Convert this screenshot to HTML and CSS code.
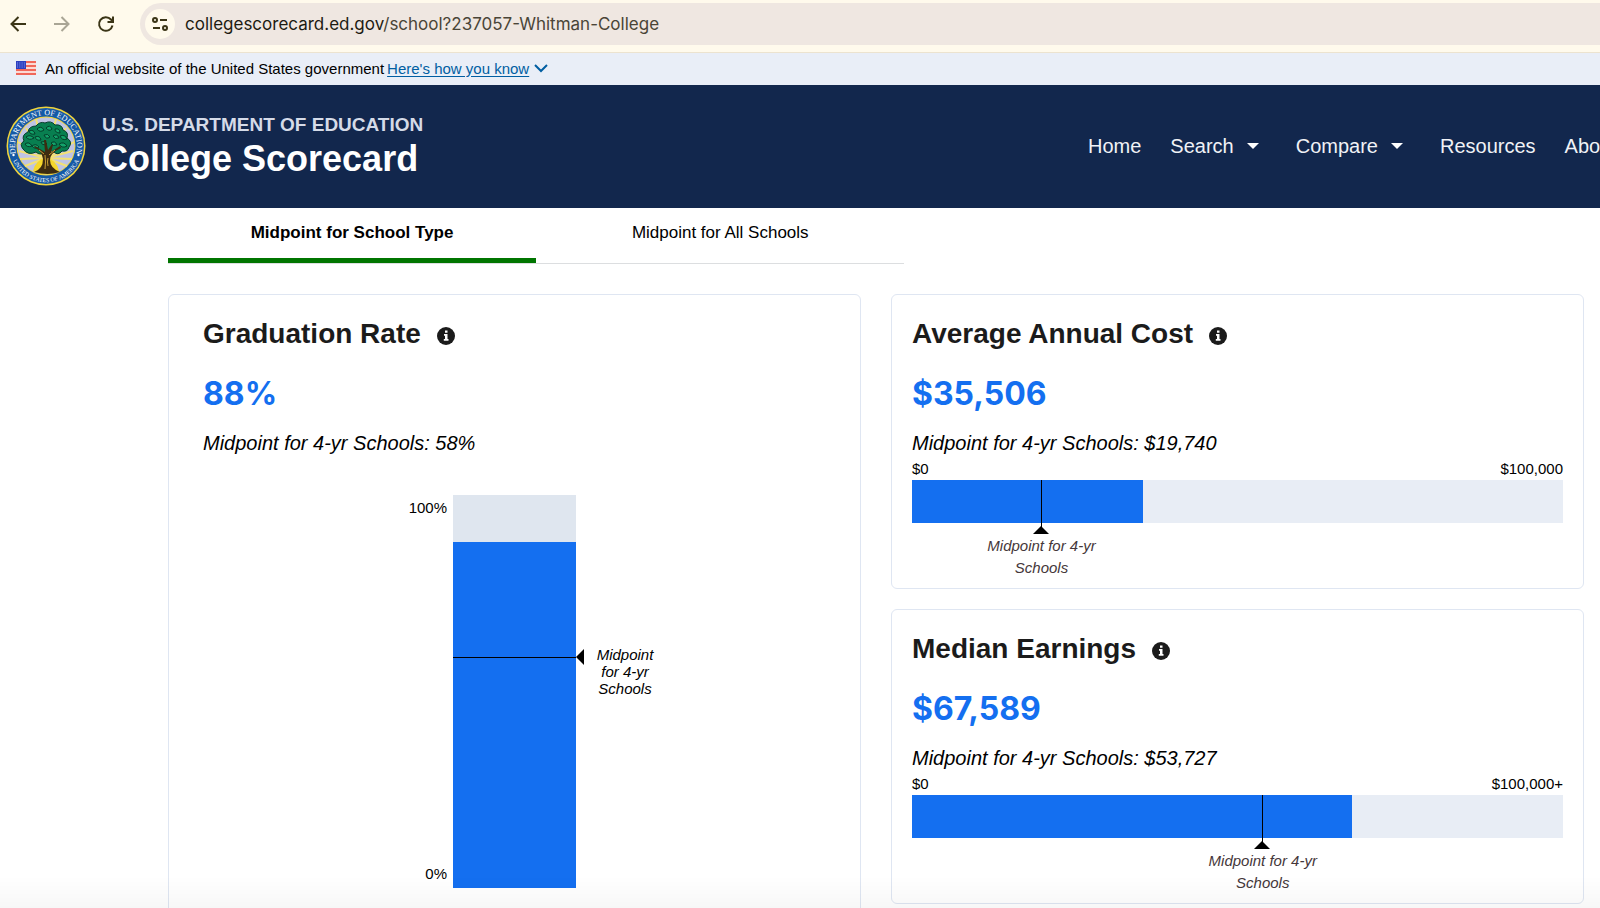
FILE: index.html
```
<!DOCTYPE html>
<html lang="en">
<head>
    <meta charset="UTF-8">
    <meta name="viewport" content="width=device-width, initial-scale=1.0">
    <title>Whitman College | College Scorecard</title>
    <link rel="stylesheet" href="styles.css">
</head>
<body>
    <div class="toolbar">
        <button class="tool-button" type="button" aria-label="Back">
            <svg width="20" height="20" viewBox="0 0 20 20" fill="none" stroke="#3b3516" stroke-width="2"><path d="M18 10H4M10.500 3L3.500 10l7 7"/></svg>
        </button>
        <button class="tool-button" type="button" aria-label="Forward" disabled>
            <svg width="20" height="20" viewBox="0 0 20 20" fill="none" stroke="#a9a595" stroke-width="2"><path d="M2 10h14M9.500 3l7 7-7 7"/></svg>
        </button>
        <button class="tool-button" type="button" aria-label="Reload">
            <svg width="20" height="20" viewBox="0 0 20 20" fill="none" stroke="#3b3516" stroke-width="2"><path d="M16.500 11.500A6.800 6.800 0 1 1 15 5.500L16.500 7.500M17 2.500v5.500h-5.500"/></svg>
        </button>
        <div class="address">
            <button class="site-info" type="button" aria-label="View site information">
                <svg width="18" height="18" viewBox="0 0 18 18" fill="none" stroke="#3b3516" stroke-width="2"><circle cx="4" cy="5" r="2"/><path d="M9 5h7M2 13h7"/><circle cx="14" cy="13" r="2"/></svg>
            </button>
            <span class="url"><span class="url-host">collegescorecard.ed.gov</span>/school?237057-Whitman-College</span>
        </div>
    </div>

    <div class="gov-banner">
        <svg class="flag" width="20" height="14" viewBox="0 0 20 14">
            <rect width="20" height="14" fill="#fbd9d4"/>
            <path d="M0 1h20M0 5h20M0 9h20M0 13h20" stroke="#f0675a" stroke-width="2"/>
            <rect width="10" height="8" fill="#2b3fc0"/>
            <path d="M1 2h8M1 4h8M1 6h8" stroke="#8292e6" stroke-width="1" stroke-dasharray="1 1.300"/>
        </svg>
        <span>An official website of the United States government</span>
        <a href="#">Here's how you know</a>
        <svg width="14" height="10" viewBox="0 0 14 10" fill="none" stroke="#005ea2" stroke-width="2"><path d="M1 2l6 6 6-6"/></svg>
    </div>

    <header class="site-header">
        <a class="brand" href="#">
            <svg class="seal" width="80" height="80" viewBox="0 0 80 80">
                <defs>
                    <path id="ring-top" d="M10.800 50.600A31 31 0 1 1 69.200 50.600"/>
                    <path id="ring-bottom" d="M5.700 51.500A36.200 36.200 0 0 0 74.300 51.500"/>
                </defs>
                <circle cx="40" cy="40" r="39.500" fill="#f0d43c"/>
                <circle cx="40" cy="40" r="38" fill="#1559a6"/>
                <circle cx="40" cy="40" r="29.500" fill="#f0d43c"/>
                <circle cx="40" cy="40" r="28.500" fill="#bfc4e4"/>
                <path d="M40 52L12 36M40 52L13 45M40 52L14 53M40 52L19 60M40 52L20 22M40 52L30 13M40 52L50 13M40 52L60 22M40 52L68 36M40 52L67 45M40 52L66 53M40 52L61 60" stroke="#f3e173" stroke-width="2"/>
                <path d="M27 65Q29 54 40 52Q51 54 53 65Q40 72 27 65Z" fill="#f5d72c"/>
                <g fill="#087f50" stroke="#053d2a" stroke-width="1">
                    <path d="M17 43q-4-5 1-8-3-6 4-9 1-6 8-6 4-5 9-3 6-3 10 2 7-1 8 5 6 2 4 8 6 4 2 9-1 5-7 4-4 5-8 1-3-3-8 0-6 4-10 0-8 4-13-3z"/>
                    <path d="M20 31q4-3 8 1-5 3-8-1zM23 25q5-2 6 3-5 1-6-3zM31 23q4-4 7 1-4 3-7-1zM40 22q4-4 6 1-3 3-6-1zM49 23q5-1 5 4-5 0-5-4zM54 30q5-2 7 3-5 2-7-3zM47 30q4-3 6 2-4 2-6-2zM38 29q4-2 6 2-4 3-6-2zM29 31q5-2 6 3-5 1-6-3zM19 38q4-3 7 2-5 2-7-2zM26 40q4-3 7 1-4 3-7-1zM35 36q4-2 6 2-5 2-6-2zM45 37q4-3 6 2-4 2-6-2zM53 38q5-3 8 2-5 3-8-2z" fill="#13a36a"/>
                </g>
                <path d="M28 66q9-3 9-13-1-8-9-12l1-1 10 6-1-12h2l2 10 4-6 1 1-2 7 9-6 1 2q-11 5-11 12 0 8 10 12-12 4-26 0z" fill="#3d2c10"/>
                <path d="M39 63q1-7 0-14M43 49l6-5M38 48l-5-4M42 60q-1-4 0-8" fill="none" stroke="#c9a035" stroke-width="1"/>
                <text class="seal-top"><textPath href="#ring-top" startOffset="50%">DEPARTMENT OF EDUCATION</textPath></text>
                <text class="seal-bottom"><textPath href="#ring-bottom" startOffset="50%">UNITED STATES OF AMERICA</textPath></text>
                <circle cx="7.500" cy="49" r="1.200" fill="#fff"/>
                <circle cx="72.500" cy="49" r="1.200" fill="#fff"/>
            </svg>
            <span class="brand-text">
                <span class="department">U.S. DEPARTMENT OF EDUCATION</span>
                <span class="product">College Scorecard</span>
            </span>
        </a>
        <nav class="main-nav">
            <a href="#">Home</a>
            <button class="nav-menu" type="button">Search <span class="caret"></span></button>
            <button class="nav-menu" type="button">Compare <span class="caret"></span></button>
            <a href="#">Resources</a>
            <a href="#">About</a>
        </nav>
    </header>

    <main>
        <div class="tabs" role="tablist">
            <button class="tab active" type="button" role="tab" aria-selected="true">Midpoint for School Type</button>
            <button class="tab" type="button" role="tab" aria-selected="false">Midpoint for All Schools</button>
        </div>

        <div class="cards">
            <section class="card card-graduation">
                <h2>Graduation Rate
                    <button class="info" type="button" aria-label="About Graduation Rate"><svg width="18" height="18" viewBox="0 0 18 18"><circle cx="9" cy="9" r="9" fill="#1b1b1b"/><path d="M8 3.500h2.500v2.200H8zM7 7h3.500v5h1v1.800H6.800V12H8V8.700H7z" fill="#fff"/></svg></button>
                </h2>
                <p class="value">88%</p>
                <p class="midpoint">Midpoint for 4-yr Schools: 58%</p>
                <div class="column-chart">
                    <div class="column-axis"><span>100%</span><span>0%</span></div>
                    <div class="column">
                        <div class="column-fill" style="height: 88%"></div>
                        <div class="column-marker" style="bottom: 58.5%"><span>Midpoint for 4-yr Schools</span></div>
                    </div>
                </div>
            </section>

            <div class="card-stack">
                <section class="card">
                    <h2>Average Annual Cost
                        <button class="info" type="button" aria-label="About Average Annual Cost"><svg width="18" height="18" viewBox="0 0 18 18"><circle cx="9" cy="9" r="9" fill="#1b1b1b"/><path d="M8 3.500h2.500v2.200H8zM7 7h3.500v5h1v1.800H6.800V12H8V8.700H7z" fill="#fff"/></svg></button>
                    </h2>
                    <p class="value">$35,506</p>
                    <p class="midpoint">Midpoint for 4-yr Schools: $19,740</p>
                    <div class="bar-axis"><span>$0</span><span>$100,000</span></div>
                    <div class="bar">
                        <div class="bar-fill" style="width: 35.506%"></div>
                        <div class="bar-marker" style="left: 19.740%"><span>Midpoint for 4-yr Schools</span></div>
                    </div>
                </section>

                <section class="card">
                    <h2>Median Earnings
                        <button class="info" type="button" aria-label="About Median Earnings"><svg width="18" height="18" viewBox="0 0 18 18"><circle cx="9" cy="9" r="9" fill="#1b1b1b"/><path d="M8 3.500h2.500v2.200H8zM7 7h3.500v5h1v1.800H6.800V12H8V8.700H7z" fill="#fff"/></svg></button>
                    </h2>
                    <p class="value">$67,589</p>
                    <p class="midpoint">Midpoint for 4-yr Schools: $53,727</p>
                    <div class="bar-axis"><span>$0</span><span>$100,000+</span></div>
                    <div class="bar">
                        <div class="bar-fill" style="width: 67.589%"></div>
                        <div class="bar-marker" style="left: 53.727%"><span>Midpoint for 4-yr Schools</span></div>
                    </div>
                </section>
            </div>
        </div>
    </main>
</body>
</html>
```

FILE: styles.css
```
* {
    box-sizing: border-box;
}
body {
    margin: 0;
    font-family: "Liberation Sans", Helvetica, Arial, sans-serif;
    color: #000;
    background: #fff;
    overflow-x: hidden;
    scrollbar-width: none;
}
body::after {
    content: "";
    position: fixed;
    left: 0;
    right: 0;
    bottom: 0;
    height: 32px;
    background: linear-gradient(rgba(0, 0, 0, 0), rgba(0, 0, 0, 0.03));
    pointer-events: none;
}
button {
    padding: 0;
    border: 0;
    background: none;
    color: inherit;
    font: inherit;
    cursor: pointer;
}
svg {
    display: block;
}

/* browser bar */
.toolbar {
    display: flex;
    align-items: center;
    height: 53px;
    padding: 2px 0 7px 8px;
    background: #fffaec;
    border-bottom: 1px solid #ece3cf;
}
.tool-button {
    flex: none;
    width: 20px;
    margin-right: 24px;
}
.address {
    flex: 1;
    display: flex;
    align-items: center;
    gap: 10px;
    height: 42px;
    padding-left: 5px;
    background: #efe7e1;
    border-radius: 21px 0 0 21px;
}
.site-info {
    display: flex;
    align-items: center;
    justify-content: center;
    width: 30px;
    height: 30px;
    border-radius: 50%;
    background: #fffaec;
}
.url {
    font-family: Inter, Roboto, sans-serif;
    font-size: 17px;
    color: #4a4537;
}
.url-host {
    color: #1d1b12;
}

.gov-banner {
    display: flex;
    align-items: center;
    height: 32px;
    padding: 0 16px 2px;
    background: #e9eef7;
    font-size: 15px;
}
.gov-banner .flag {
    margin-right: 9px;
}
.gov-banner a {
    margin: 0 5px 0 3px;
    color: #005ea2;
    text-underline-offset: 2px;
}

.site-header {
    display: flex;
    align-items: center;
    height: 123px;
    padding-bottom: 1px;
    background: #12274d;
    color: #fff;
    overflow: hidden;
}
.brand {
    flex: 0 0 68%;
    display: flex;
    align-items: center;
    gap: 16px;
    padding-left: 6px;
    color: #fff;
    text-decoration: none;
}
.seal {
    flex: none;
}
.seal text {
    font-family: "Liberation Serif", serif;
    fill: #fff;
    text-anchor: middle;
}
.seal-top {
    font-size: 8px;
}
.seal-bottom {
    font-size: 6px;
}
.brand-text {
    display: flex;
    flex-direction: column;
    font-weight: bold;
}
.department {
    font-size: 19px;
    line-height: 26px;
    color: #d5dbe8;
}
.product {
    font-size: 36px;
    line-height: 42px;
}
.main-nav {
    flex: none;
    display: flex;
    align-items: center;
    gap: 29px;
    font-size: 20px;
}
.main-nav a {
    color: #f0f2f6;
    text-decoration: none;
}
.nav-menu {
    display: flex;
    align-items: center;
    gap: 13px;
    padding-right: 8px;
    color: #f0f2f6;
}
.caret {
    border: 6px solid transparent;
    border-top-color: #fff;
    border-bottom: 0;
}

main {
    padding: 0 16px 0 168px;
}
.tabs {
    display: flex;
    width: 52%;
    min-width: 480px;
    margin-bottom: 30px;
    border-bottom: 1px solid #dcdee0;
}
.tab {
    flex: 1;
    height: 55px;
    border-bottom: 5px solid transparent;
    font-size: 17px;
}
.tab.active {
    border-bottom-color: #007500;
    font-weight: bold;
}

.cards {
    display: grid;
    grid-template-columns: 1fr 1fr;
    gap: 30px;
}
.card-stack {
    display: grid;
    align-content: start;
    gap: 20px;
}
.card {
    padding: 21px 20px 7px;
    border: 1px solid #dfe6f2;
    border-radius: 6px;
}
.card-graduation {
    padding: 21px 34px 40px;
}
.card h2 {
    display: flex;
    align-items: center;
    gap: 16px;
    margin: 0;
    font-size: 28px;
    line-height: 36px;
    color: #1b1b1b;
}
.info {
    padding-top: 3px;
}
.value {
    margin: 20px 0 15px;
    font-family: Inter, sans-serif;
    font-size: 32px;
    font-weight: bold;
    line-height: 44px;
    color: #146ff0;
}
.midpoint {
    margin: 0;
    font-size: 20px;
    font-style: italic;
    line-height: 24px;
}

.bar-axis {
    display: flex;
    justify-content: space-between;
    margin-top: 4px;
    font-size: 15px;
    line-height: 20px;
}
.bar {
    position: relative;
    height: 43px;
    margin: 1px 0 58px;
    background: #e8edf5;
}
.bar-fill {
    height: 100%;
    background: #146ff0;
}
.bar-marker {
    position: absolute;
    top: 0;
    height: 48px;
    border-left: 1px solid #000;
}
.bar-marker::after {
    content: "";
    position: absolute;
    top: 46px;
    left: -9px;
    border: 8px solid transparent;
    border-top: 0;
    border-bottom-color: #000;
}
.bar-marker span {
    position: absolute;
    top: 55px;
    left: -60px;
    width: 120px;
    font-size: 15px;
    font-style: italic;
    line-height: 22px;
    text-align: center;
    color: #45373a;
}

.column-chart {
    display: grid;
    grid-template-columns: 1fr 123px 1fr;
    margin-top: 40px;
}
.column-axis {
    display: flex;
    flex-direction: column;
    justify-content: space-between;
    padding: 4px 6px 6px 0;
    font-size: 15px;
    line-height: 17px;
    text-align: right;
}
.column {
    position: relative;
    display: flex;
    align-items: flex-end;
    height: 393px;
    background: #dfe6ef;
}
.column-fill {
    width: 100%;
    background: #146ff0;
}
.column-marker {
    position: absolute;
    left: 0;
    width: 100%;
    border-top: 1px solid #000;
}
.column-marker::after {
    content: "";
    position: absolute;
    top: -9px;
    left: 100%;
    border: 8px solid transparent;
    border-left: 0;
    border-right-color: #000;
}
.column-marker span {
    position: absolute;
    top: -12px;
    left: 100%;
    width: 64px;
    margin-left: 17px;
    font-size: 15px;
    font-style: italic;
    line-height: 17px;
    text-align: center;
}
```
